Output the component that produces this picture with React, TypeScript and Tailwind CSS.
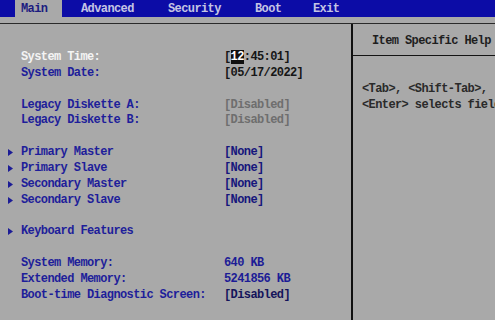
import { ReactNode } from "react";

const tabs = ["Main", "Advanced", "Security", "Boot", "Exit"];
const tabX = [21, 81, 168, 255, 313];

type Row = {
  label?: string;
  value?: ReactNode;
  arrow?: boolean;
  labelColor?: string;
  valueColor?: string;
};

const Arrow = () => (
  <svg width="5" height="7" viewBox="0 0 5 7" className="absolute left-[8px] top-[4px]">
    <path d="M0 0 L5 3.5 L0 7 Z" fill="#1c1c96" />
  </svg>
);

const rows: Row[] = [
  {
    label: "System Time:",
    labelColor: "text-[#f4f4f4]",
    valueColor: "text-[#161616]",
    value: (
      <>
        [<span className="bg-[#101010] text-white">12</span>:45:01]
      </>
    ),
  },
  { label: "System Date:", value: "[05/17/2022]", valueColor: "text-[#161616]" },
  {},
  { label: "Legacy Diskette A:", value: "[Disabled]", valueColor: "text-[#6e6e6e]" },
  { label: "Legacy Diskette B:", value: "[Disabled]", valueColor: "text-[#6e6e6e]" },
  {},
  { label: "Primary Master", value: "[None]", arrow: true },
  { label: "Primary Slave", value: "[None]", arrow: true },
  { label: "Secondary Master", value: "[None]", arrow: true },
  { label: "Secondary Slave", value: "[None]", arrow: true },
  {},
  { label: "Keyboard Features", arrow: true },
  {},
  { label: "System Memory:", value: "640 KB", valueColor: "text-[#1c1c96]" },
  { label: "Extended Memory:", value: "5241856 KB", valueColor: "text-[#1c1c96]" },
  { label: "Boot-time Diagnostic Screen:", value: "[Disabled]", valueColor: "text-[#14145a]" },
];

export default function App() {
  return (
    <div
      className="w-[495px] h-[320px] overflow-hidden bg-[#a9a9a9] flex flex-col text-[12px] font-bold tracking-[-0.6px] whitespace-nowrap"
      style={{ fontFamily: '"Liberation Mono", "DejaVu Sans Mono", monospace' }}
    >
      {/* menu bar */}
      <div className="relative h-[17px] bg-[#0c0ca6] shrink-0">
        <div className="absolute left-[15px] top-0 h-[17px] w-[47px] bg-[#a9a9a9]" />
        {tabs.map((t, i) => (
          <span
            key={t}
            className={`absolute top-[1px] leading-[17px] ${i === 0 ? "text-[#1c1c80]" : "text-[#c4c4e4]"}`}
            style={{ left: tabX[i] }}
          >
            {t}
          </span>
        ))}
      </div>
      <div className="h-[6px] shrink-0" />
      <div className="h-[1px] bg-[#2a2a2a] shrink-0" />

      <div className="flex flex-1 min-h-0">
        {/* settings list */}
        <div className="w-[353px] shrink-0 border-r-2 border-[#101010] pt-[26px]">
          {rows.map((r, i) => (
            <div key={i} className="relative flex h-[15.85px] leading-[15.85px]">
              {r.arrow && <Arrow />}
              <span className={`pl-[21px] w-[224px] ${r.labelColor ?? "text-[#1e1e9a]"}`}>{r.label}</span>
              <span className={r.valueColor ?? "text-[#16167c]"}>{r.value}</span>
            </div>
          ))}
        </div>

        {/* help panel */}
        <div className="flex-1 min-w-0 overflow-hidden flex flex-col text-[#1e1e1e]">
          <div className="h-[32px] flex items-center pt-[3px] pl-[19px] border-b border-[#141414]">Item Specific Help</div>
          <div className="pt-[25px] pl-[9px] leading-[16px] text-[#2a2a2a]">
            <div>&lt;Tab&gt;, &lt;Shift-Tab&gt;,</div>
            <div>&lt;Enter&gt; selects field.</div>
          </div>
        </div>
      </div>
    </div>
  );
}
